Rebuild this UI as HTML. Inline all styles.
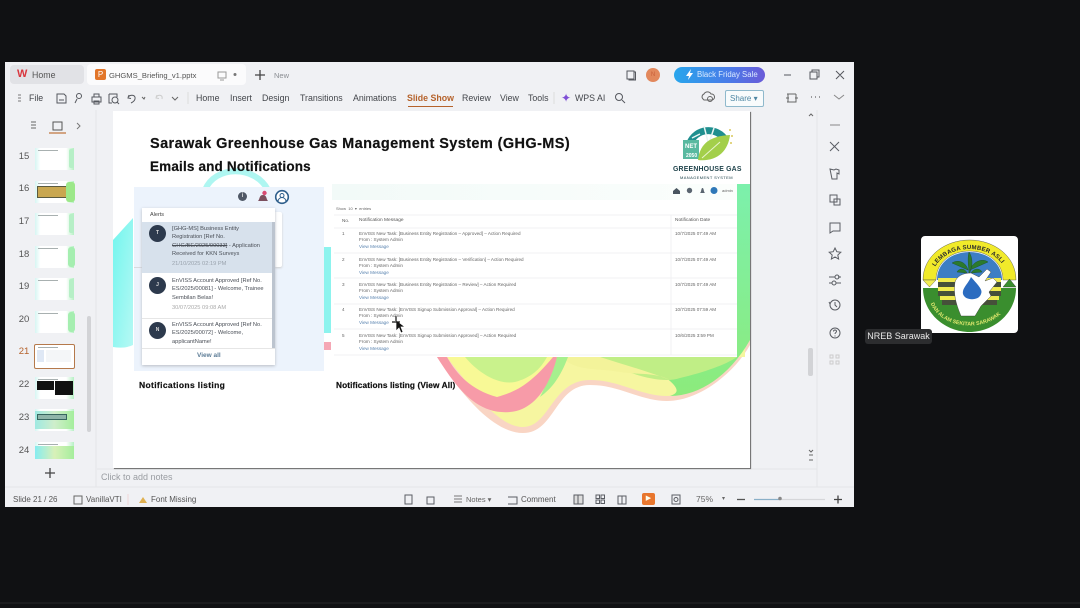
<!DOCTYPE html>
<html><head><meta charset="utf-8"><style>
html,body{margin:0;padding:0;background:#101113;width:1080px;height:608px;overflow:hidden}
body{position:relative;font-family:"Liberation Sans","DejaVu Sans",sans-serif;color:#3c3f44}
.a{position:absolute;white-space:nowrap}
.m{font-size:8.8px;color:#43464b;line-height:11px}
.t{font-size:4.6px;color:#666;line-height:6.3px}
.al{font-size:5.7px;color:#4a4f57;line-height:8.4px}
.th{position:absolute;left:35px;width:39px;height:22px;background:linear-gradient(90deg,#d6f6f3 0,#fff 14%,#fff 80%,#b6f0c4 100%)}
.th:after{content:"";position:absolute;left:3px;top:2px;width:20px;height:1px;background:#a8b0b0}
.n{position:absolute;left:16px;width:16px;text-align:center;font-size:9.5px;color:#555}
.av{position:absolute;left:149px;width:17px;height:17px;border-radius:50%;background:#2d3a4d;color:#ddd;font-size:5px;font-weight:bold;text-align:center;line-height:17px}
.h{-webkit-text-stroke:.2px #111}
svg{position:absolute;overflow:visible}
</style></head><body>
<div class="a" style="left:5px;top:62px;width:849px;height:445px;background:#f0f1f4"></div>
<div class="a" style="left:0;top:602px;width:1080px;height:2px;background:#1b1c1e"></div>

<div class="a" style="left:10px;top:65px;width:74px;height:19px;background:#e1e2e6;border-radius:4px"></div>
<div class="a" style="left:87px;top:64px;width:159px;height:21px;background:#fbfbfc;border-radius:4px"></div>
<div class="a" style="left:17px;top:68px;font-size:11px;font-weight:bold;color:#d9363e">W</div>
<div class="a m" style="left:32px;top:70px;color:#555">Home</div>
<div class="a" style="left:95px;top:69px;width:11px;height:11px;background:#e2762a;border-radius:2px;color:#fff;font-size:8px;line-height:11px;text-align:center">P</div>
<div class="a m" style="left:109px;top:70px;color:#555;font-size:7.6px">GHGMS_Briefing_v1.pptx</div>
<div class="a m" style="left:274px;top:70px;color:#8a8d92;font-size:7.5px">New</div>
<svg style="left:0;top:0" width="1080" height="608" fill="none" stroke="#55585e" stroke-width="1">
<path d="M218 72h8v6h-8zM220 80h4" stroke="#999"/><circle cx="235" cy="74.5" r="1.5" fill="#777" stroke="none"/>
<path d="M260 70v10M255 75h10" stroke="#444" stroke-width="1.3"/>
<path d="M627 71h7v8h-7zM634 72h1.5v8h-7"/>
<path d="M784 75h7M810 72h7v7h-7zM812 72v-2h7v7h-2M836 71l8 8M844 71l-8 8"/>
<path d="M18 95h3M18 98h3M18 101h3" stroke="#777"/>
<path d="M57 94h7l2 2v7h-9zM59 100h5"/><circle cx="79" cy="96" r="2.5"/><path d="M77 99l-2 4"/>
<path d="M92 97h9v5h-9zM94 97v-3h5v3M94 101h5v3h-5z"/>
<path d="M109 94h8v3M109 94v9h3"/><circle cx="115" cy="100" r="3"/><path d="M117 102l2 2"/>
<path d="M129 95l-1 3 3 .5M128 97c3-3 8-2 7 2-.5 2-2 3-4 4"/><path d="M142 97l2 2 1-2" stroke="#666"/>
<path d="M157 95l-1 3 3 .5M156 97c3-3 7-2 6 2" stroke="#ccc"/><path d="M172 97l3 3 3-3" stroke="#666"/>
<path d="M188 92v12" stroke="#ddd"/>
<path d="M554 92v12" stroke="#ddd"/>
<circle cx="619" cy="97" r="3.5"/><path d="M622 100l3 3"/>
<path d="M703 99a3 3 0 0 1 1-5 4 4 0 0 1 7 0 3 3 0 0 1 1 6h-8z" stroke="#666"/><circle cx="710" cy="99" r="2.5" stroke="#666"/>
<path d="M787 94h9M788 94v8h8v-8M786 98h3M795 98h3M787 102h9" stroke="#666"/>
<path d="M811 97h1M815 97h1M819 97h1" stroke="#444"/><path d="M834 95l5 4 5-4" stroke="#888"/>
<path d="M31 122h5M31 125h5M31 128h5" stroke="#666"/>
<rect x="53" y="122" width="9" height="8" stroke="#555"/><path d="M49 133h17" stroke="#c0763d" stroke-width="1.3"/>
<path d="M77 123l3 3-3 3" stroke="#777"/>
<path d="M45 473h10M50 468v10" stroke="#444" stroke-width="1.3"/>
<path d="M96 110v377M5 487h849M817 110v377M97 469h720" stroke="#e4e5e8"/>
</svg>
<div class="a" style="left:646px;top:68px;width:14px;height:14px;border-radius:50%;background:#e2885c;color:#c9603a;font-size:6px;line-height:14px;text-align:center">N</div>
<div class="a" style="left:674px;top:67px;width:91px;height:16px;border-radius:8px;background:linear-gradient(90deg,#28a6ec,#4a7be8 60%,#6a5bd8);color:#dbeaff;font-size:7.8px;line-height:16px;text-indent:23px">Black Friday Sale</div>
<svg style="left:0;top:0" width="1080" height="608"><path d="M691 69l-5 7h3l-1 4 5-7h-3z" fill="#fff"/></svg>

<div class="a m" style="left:29px;top:93px">File</div>
<div class="a m" style="left:196px;top:93px">Home</div>
<div class="a m" style="left:230px;top:93px">Insert</div>
<div class="a m" style="left:262px;top:93px">Design</div>
<div class="a m" style="left:300px;top:93px">Transitions</div>
<div class="a m" style="left:353px;top:93px">Animations</div>
<div class="a m" style="left:407px;top:93px;color:#b5622b;font-weight:bold">Slide Show</div>
<div class="a" style="left:408px;top:106px;width:45px;height:1px;background:#b5622b"></div>
<div class="a m" style="left:462px;top:93px">Review</div>
<div class="a m" style="left:500px;top:93px">View</div>
<div class="a m" style="left:528px;top:93px">Tools</div>
<div class="a" style="left:561px;top:91px;font-size:12px;color:#7f4fd6">✦</div>
<div class="a m" style="left:575px;top:93px">WPS AI</div>
<div class="a" style="left:725px;top:90px;width:37px;height:15px;border:1px solid #8fb9cc;border-radius:2px;background:#f8fbfc;color:#4d86a3;font-size:8px;line-height:15px;text-indent:4px">Share ▾</div>

<div class="th" style="top:148px"></div><div class="th" style="top:181px"></div><div class="th" style="top:213px"></div><div class="th" style="top:246px"></div><div class="th" style="top:278px"></div><div class="th" style="top:311px"></div><div class="th" style="top:344px;height:23px;border:1px solid #b5794b;left:34px;width:39px;border-radius:2px;background:#fff"></div><div class="th" style="top:377px"></div><div class="th" style="top:409px"></div><div class="th" style="top:442px;height:17px"></div>
<div class="a" style="left:37px;top:186px;width:28px;height:10px;background:#c9a750;border:1px solid #5a5a40"></div>
<div class="a" style="left:66px;top:182px;width:9px;height:20px;background:#9ce889;border-radius:3px"></div>
<div class="a" style="left:68px;top:247px;width:7px;height:20px;background:#a5eeb0;border-radius:3px"></div>
<div class="a" style="left:68px;top:312px;width:7px;height:20px;background:#a5eeb0;border-radius:3px"></div>
<div class="a" style="left:69px;top:149px;width:5px;height:19px;background:#b6efc6;border-radius:2px"></div>
<div class="a" style="left:69px;top:214px;width:5px;height:19px;background:#b6efc6;border-radius:2px"></div>
<div class="a" style="left:69px;top:279px;width:5px;height:19px;background:#b6efc6;border-radius:2px"></div>
<div class="a" style="left:37px;top:350px;width:7px;height:12px;background:#dfe8f5"></div>
<div class="a" style="left:46px;top:350px;width:25px;height:12px;background:#f4f6f8"></div>
<div class="a" style="left:37px;top:381px;width:17px;height:9px;background:#111"></div><div class="a" style="left:55px;top:381px;width:18px;height:14px;background:#111"></div>
<div class="a" style="left:35px;top:411px;width:39px;height:18px;background:linear-gradient(90deg,#9fe9e2,#cfeecb,#a5ee9c)"></div>
<div class="a" style="left:37px;top:414px;width:28px;height:4px;background:#8fb5a9;border:1px solid #38665f"></div>
<div class="a" style="left:35px;top:446px;width:39px;height:13px;background:linear-gradient(90deg,#86ecf0,#d8f0b8,#a5ee9c)"></div>
<div class="n" style="top:151px">15</div><div class="n" style="top:183px">16</div><div class="n" style="top:216px">17</div><div class="n" style="top:249px">18</div><div class="n" style="top:281px">19</div><div class="n" style="top:314px">20</div><div class="n" style="top:346px;color:#b5622b">21</div><div class="n" style="top:379px">22</div><div class="n" style="top:412px">23</div><div class="n" style="top:445px">24</div>
<div class="a" style="left:87px;top:316px;width:4px;height:116px;background:#d2d3d6;border-radius:2px"></div>
<div class="a" style="left:808px;top:348px;width:5px;height:28px;background:#d2d3d6;border-radius:2px"></div>

<div class="a" style="left:113px;top:111px;width:637px;height:357px;background:#fff;box-shadow:1px 1px 0 #777,1px 1px 1px #999;overflow:hidden">
<svg style="left:0;top:0" width="637" height="357" viewBox="113 111 637 357">
<defs>
<linearGradient id="gg" x1="0" y1="0" x2="0" y2="1"><stop offset="0" stop-color="#7cf0ac"/><stop offset="1" stop-color="#8ceb7c"/></linearGradient>
<linearGradient id="tg" x1="0" y1="0" x2="1" y2="1"><stop offset="0" stop-color="#72f6ee"/><stop offset="1" stop-color="#b6f8f4"/></linearGradient>
</defs>
<path d="M205 190C215 165 255 165 268 190" fill="none" stroke="#aef6f1" stroke-width="6"/>
<path d="M113 240L133 218V345Q125 349 113 347z" fill="url(#tg)"/>
<path d="M737 184H750V345C735 372 700 401 667 401C640 401 620 385 590 385C555 385 555 433 523 433C490 433 455 385 437 357H737z" fill="#f9d5c4"/>
<path d="M448 357C465 380 495 427 523 427C550 427 552 380 590 380C620 380 640 396 667 396C695 396 725 375 745 340V357z" fill="#f6f6a0"/>
<path d="M640 357C660 375 690 390 670 396C700 396 730 375 750 340V184H737V357z" fill="url(#gg)"/>
<path d="M600 357C620 372 660 385 680 378C705 372 725 365 737 357z" fill="#c0ee86"/>
<path d="M562 357C575 372 600 368 620 372C640 375 655 372 670 380C650 372 625 365 600 357z" fill="#f3f39a"/>
<path d="M557 357L568 357C560 378 552 388 540 397C546 385 552 372 557 357z" fill="#a6f08e"/>
<path d="M447 357C460 375 475 395 495 397C525 395 545 375 553 357z" fill="#f8f996"/>
<path d="M465 357C480 375 500 385 515 382C530 378 540 370 547 357z" fill="#c9f28c"/>
<path d="M437 357H447C455 372 470 390 497 397C515 392 530 385 553 357H557C550 385 535 410 510 412C475 415 455 385 437 357z" fill="#f79ba8"/>
<path d="M324 247h7v86h-7z" fill="#8df3ee"/><path d="M324 342h7v8h-7z" fill="#f5a7b5"/>
</svg>
<div class="a h" style="left:37px;top:25px;font-size:14.5px;font-weight:bold;color:#111;letter-spacing:.4px">Sarawak Greenhouse Gas Management System (GHG-MS)</div>
<div class="a h" style="left:37px;top:48px;font-size:13.5px;font-weight:bold;color:#111;letter-spacing:.17px">Emails and Notifications</div>
</div>

<svg style="left:0;top:0" width="1080" height="608">
<path d="M689 146a20 20 0 0 1 35-8" fill="none" stroke="#1f8f8f" stroke-width="7"/>
<path d="M692 138l8-4M704 126l4 16M714 128l-4 12" stroke="#e9f5f3" stroke-width="1.5"/>
<rect x="683" y="140" width="16" height="19" fill="#59b9a0"/>
<path d="M698 160C700 142 712 136 730 135C728 152 716 162 698 160z" fill="#a3cf4a"/>
<path d="M702 158l18-16" stroke="#e9f5cf" fill="none"/>
<circle cx="730" cy="130" r="1" fill="#d8c85a"/><circle cx="732" cy="136" r="1" fill="#d8c85a"/><circle cx="731" cy="143" r="1" fill="#d8c85a"/>
<text x="685" y="148" font-size="6" font-weight="bold" fill="#fff" font-family="Liberation Sans">NET</text>
<text x="686" y="157" font-size="5" font-weight="bold" fill="#fff" font-family="Liberation Sans">2050</text>
</svg>
<div class="a" style="left:673px;top:166px;font-size:6.9px;color:#20444c;font-weight:bold;letter-spacing:.2px">GREENHOUSE GAS</div>
<div class="a" style="left:680px;top:175px;font-size:4px;color:#20444c;letter-spacing:.4px">MANAGEMENT SYSTEM</div>

<!-- left panel -->
<div class="a" style="left:134px;top:187px;width:190px;height:184px;background:#ecf3fc"></div>
<div class="a" style="left:134px;top:267px;width:8px;height:1px;background:#d8dade"></div>
<div class="a" style="left:274px;top:212px;width:8px;height:55px;background:#fff;box-shadow:0 1px 2px #ccc;border-radius:2px"></div>
<div class="a" style="left:238px;top:192px;width:9px;height:9px;border-radius:50%;background:#4f5866;color:#ddd;font-size:6px;line-height:9px;text-align:center;font-weight:bold">i</div>
<svg style="left:0;top:0" width="1080" height="608">
<path d="M258 201c2-2 1-6 5-6s3 4 5 6z" fill="#7b4f5e"/><circle cx="264.500" cy="193" r="2.200" fill="#d94a73"/>
<circle cx="282" cy="197" r="6.300" fill="#fff" stroke="#2f5f8c" stroke-width="1.600"/><circle cx="282" cy="195.500" r="2" fill="none" stroke="#2f5f8c"/><path d="M278 201.500a4 4 0 0 1 8 0" fill="none" stroke="#2f5f8c"/>
</svg>
<div class="a" style="left:142px;top:208px;width:133px;height:157px;background:#fff;box-shadow:0 1px 3px #b8bcc4"></div>
<div class="a" style="left:150px;top:212px;font-size:5.5px;color:#444">Alerts</div>
<div class="a" style="left:142px;top:222px;width:133px;height:51px;background:#d7e1ec"></div>
<div class="a" style="left:272px;top:222px;width:3px;height:126px;background:#bcc4cf"></div>
<div class="a" style="left:142px;top:318px;width:130px;height:1px;background:#e6e6e6"></div>
<div class="a" style="left:142px;top:348px;width:133px;height:1px;background:#e6e6e6"></div>
<div class="av" style="top:225px">T</div><div class="av" style="top:277px">J</div><div class="av" style="top:322px">N</div>
<div class="a al" style="left:172px;top:225px">[GHG-MS] Business Entity<br>Registration [Ref No.<br><s>GHG/BE/2025/00033]</s> - Application<br>Received for KKN Surveys</div>
<div class="a al" style="left:172px;top:260px;color:#9aa3ad">21/10/2025 02:19 PM</div>
<div class="a al" style="left:172px;top:277px">EnVISS Account Approved [Ref No.<br>ES/2025/00081] - Welcome, Trainee<br>Sembilan Belas!</div>
<div class="a al" style="left:172px;top:304px;color:#aaa">30/07/2025 09:08 AM</div>
<div class="a al" style="left:172px;top:321px">EnVISS Account Approved [Ref No.<br>ES/2025/00072] - Welcome,<br>applicantName!</div>
<div class="a" style="left:197px;top:352px;font-size:6.5px;color:#5c7c96;font-weight:bold">View all</div>

<!-- right panel -->
<div class="a" style="left:332px;top:184px;width:405px;height:173px;background:#fff"></div>
<div class="a" style="left:332px;top:184px;width:405px;height:16px;background:linear-gradient(90deg,#f2faf8,#fbfefc)"></div>
<svg style="left:0;top:0" width="1080" height="608">
<path d="M673 191l3.500-3 3.500 3v3h-7z" fill="#4a5560"/><circle cx="689.500" cy="190.500" r="2.700" fill="#5a6570"/><path d="M700 193c1.500-1 1-5 2.500-5s1 4 2.500 5z" fill="#5a6570"/><circle cx="714" cy="190.500" r="3.500" fill="#2f78b8"/>
<path d="M334 215h403M334 228h403M334 253h403M334 278h403M334 304h403M334 329h403M334 355h403M671 215v140" stroke="#f0f1f3" fill="none"/>
<path d="M396 320v11l3-3 2 5 2-1-2-5h4z" fill="#111" stroke="#fff" stroke-width=".7"/>
<path d="M396 316v5M392 322h8" stroke="#111" stroke-width="1.200"/>
</svg>
<div class="a t" style="left:722px;top:188px;font-size:4px">admin</div>
<div class="a t" style="left:336px;top:206px;font-size:4px">Show &nbsp;10 &nbsp;▾ &nbsp;entries</div>
<div class="a t" style="left:342px;top:218px;color:#555">No.</div>
<div class="a t" style="left:359px;top:218px;font-size:4.800px;color:#555">Notification Message</div>
<div class="a t" style="left:675px;top:218px;font-size:4.800px;color:#555">Notification Date</div>
<div class="a t" style="left:342px;top:231px">1</div><div class="a t" style="left:342px;top:257px">2</div><div class="a t" style="left:342px;top:282px">3</div><div class="a t" style="left:342px;top:307px">4</div><div class="a t" style="left:342px;top:333px">5</div>
<div class="a t" style="left:359px;top:231px">EnVISS New Task: [Business Entity Registration – Approved] – Action Required<br>From : System Admin<br><span style="color:#5a84b0">View Message</span></div>
<div class="a t" style="left:359px;top:257px">EnVISS New Task: [Business Entity Registration – Verification] – Action Required<br>From : System Admin<br><span style="color:#5a84b0">View Message</span></div>
<div class="a t" style="left:359px;top:282px">EnVISS New Task: [Business Entity Registration – Review] – Action Required<br>From : System Admin<br><span style="color:#5a84b0">View Message</span></div>
<div class="a t" style="left:359px;top:307px">EnVISS New Task: [EnVISS Signup Submission Approval] – Action Required<br>From : System Admin<br><span style="color:#5a84b0">View Message</span></div>
<div class="a t" style="left:359px;top:333px">EnVISS New Task: [EnVISS Signup Submission Approved] – Action Required<br>From : System Admin<br><span style="color:#5a84b0">View Message</span></div>
<div class="a t" style="left:675px;top:231px">10/7/2025 07:49 AM</div><div class="a t" style="left:675px;top:257px">10/7/2025 07:49 AM</div><div class="a t" style="left:675px;top:282px">10/7/2025 07:49 AM</div><div class="a t" style="left:675px;top:307px">10/7/2025 07:59 AM</div><div class="a t" style="left:675px;top:333px">10/6/2025 3:59 PM</div>
<div class="a h" style="left:139px;top:380px;font-size:8.500px;font-weight:bold;color:#111;letter-spacing:.35px">Notifications listing</div>
<div class="a h" style="left:336px;top:380px;font-size:8.300px;font-weight:bold;color:#111;letter-spacing:.1px">Notifications listing (View All)</div>

<svg style="left:0;top:0" width="1080" height="608" fill="none" stroke="#5a5d63">
<path d="M830 125h10" stroke="#888"/><path d="M830 142l9 9M839 142l-9 9"/><path d="M830 169l4 1 2-1 3 1v4l-2-1v6h-5z"/>
<path d="M830 195h7v7h-7zM834 199h6v6h-6z"/><path d="M830 223h10v8h-7l-3 2z"/><path d="M835 248l1.800 3.700 4 .5-3 2.800 .8 4-3.600-2-3.600 2 .8-4-3-2.800 4-.5z"/>
<path d="M829 277h6M838 277h3M829 283h3M836 283h5"/><circle cx="837" cy="277" r="2"/><circle cx="834" cy="283" r="2"/>
<circle cx="835" cy="305" r="5"/><path d="M835 302v3l2 2M829 302l1 2"/><circle cx="835" cy="333" r="5"/><path d="M833.500 331.500c0-2 3-2 3 0 0 1-1.500 1-1.500 2.500M835 335.500v1"/>
<path d="M830 355h3v3h-3zM836 355h3v3h-3zM830 361h3v3h-3zM836 361h3v3h-3z" stroke="#ccc"/>
<path d="M809 116l2-2 2 2M809 450l2 2 2-2M809 455h4M809 460h4" stroke="#666"/>
<path d="M405 495h7v9h-7z"/><path d="M427 497h7v7h-7z"/><path d="M454 496h8M454 499h8M454 502h8" stroke="#777"/>
<path d="M508 497h9v7h-9"/><rect x="574" y="495" width="9" height="9" fill="#ddd"/><path d="M578 495v9"/>
<rect x="596" y="495" width="3.500" height="3.500"/><rect x="601" y="495" width="3.500" height="3.500"/><rect x="596" y="500" width="3.500" height="3.500"/><rect x="601" y="500" width="3.500" height="3.500"/>
<path d="M618 496h8v8h-8zM622 496v8"/><path d="M672 495h8v9h-8z"/><circle cx="676" cy="499.500" r="2"/>
<path d="M737 499.500h8" stroke="#555" stroke-width="1.300"/><path d="M754 499.500h26" stroke="#8ab0c8" stroke-width="1.200"/><path d="M780 499.500h45" stroke="#d6d7da" stroke-width="1.200"/><circle cx="780" cy="498.500" r="1.800" fill="#888" stroke="none"/>
<path d="M834 499.500h8M838 495.500v8" stroke="#444" stroke-width="1.300"/>
<path d="M74 496h8v8h-8z" stroke="#666"/>
<path d="M139 503l4-6 4 6z" fill="#e0b050" stroke="none"/><path d="M128 494v11" stroke="#f0d8d8"/>
</svg>
<div class="a" style="left:101px;top:472px;font-size:9px;color:#9a9da2">Click to add notes</div>
<div class="a m" style="left:13px;top:494px;font-size:8px;color:#555">Slide 21 / 26</div>
<div class="a m" style="left:86px;top:494px;font-size:8px;color:#555">VanillaVTI</div>
<div class="a m" style="left:151px;top:494px;font-size:8px;color:#555">Font Missing</div>
<div class="a m" style="left:466px;top:494px;font-size:7.500px;color:#666">Notes ▾</div>
<div class="a m" style="left:521px;top:494px;font-size:8px;color:#555">Comment</div>
<div class="a" style="left:642px;top:493px;width:13px;height:12px;background:#e8762d;border-radius:2px;color:#ffe;font-size:7px;line-height:12px;text-align:center">▶</div>
<div class="a m" style="left:696px;top:494px;font-size:8.500px;color:#666">75%</div>
<div class="a" style="left:722px;top:495px;font-size:6px;color:#666">▾</div>

<!-- avatar -->
<div class="a" style="left:921px;top:236px;width:97px;height:97px;background:#fff;border-radius:4px"></div>
<svg style="left:921px;top:236px" width="97" height="97" viewBox="0 0 97 97">
<path d="M2 44C2 20 24 4 48.500 4S95 20 95 44H82C82 26 66 15 48.500 15S15 26 15 44z" fill="#f1ea2a" stroke="#444" stroke-width=".4"/>
<path d="M16 44C16 26 32 16 48.500 16S81 26 81 44z" fill="#3d7ec4"/>
<path d="M2 52H95C95 78 72 96 48.500 96S2 78 2 52z" fill="#3a8e2e"/>
<path d="M17 42h63v4H17zM17 51h63v4H17zM19 60h59v4H19z" fill="#efea4e"/>
<path d="M17 46h63v5H17zM17 55h63v5H17zM21 64h55v5H21z" fill="#46503a"/>
<path d="M2 44H15L8.500 51z" fill="#f3ee52" stroke="#444" stroke-width=".4"/>
<path d="M82 51L88.500 43 95 51z" fill="#3a8e2e" stroke="#333" stroke-width=".4"/>
<path d="M48 38C48 31 46 24 48 16C52 22 52 31 48 38zM47 34L31 27C37 23 45 26 47 34zM49 34L67 26C62 22 52 25 49 34zM46 37L36 36C38 32 44 32 46 37zM50 37L61 36C59 32 53 32 50 37z" fill="#2b7a2d" stroke="#1c4d1f" stroke-width=".4"/>
<path d="M40 80C36 70 32 60 34 46C36 40 42 37 50 37L58 41L66 33L70 36L64 45L72 42L76 46L68 56L70 60L60 70L54 80z" fill="#fff" stroke="#333" stroke-width=".4"/>
<path d="M50 41C58 50 62 54 60 58C58 65 44 65 42 58C41 52 47 48 50 41z" fill="#2c6cc0"/>
<defs><path id="c1" d="M10.500 44A38 31 0 0 1 86.500 44"/><path id="c2" d="M7 58C12 100 85 100 90 58"/></defs>
<text font-family="Liberation Sans" font-size="6" font-weight="bold" fill="#2a2a2a" letter-spacing=".2"><textPath href="#c1" startOffset="14">LEMBAGA SUMBER ASLI</textPath></text>
<text font-family="Liberation Sans" font-size="5.300" font-weight="bold" fill="#dfe76e"><textPath href="#c2" startOffset="10">DAN ALAM SEKITAR SARAWAK</textPath></text>
</svg>
<div class="a" style="left:865px;top:329px;width:67px;height:15px;background:#2c2d2f;border-radius:3px;color:#e8e8e8;font-size:9px;line-height:15px;text-align:center">NREB Sarawak</div>
</body></html>
